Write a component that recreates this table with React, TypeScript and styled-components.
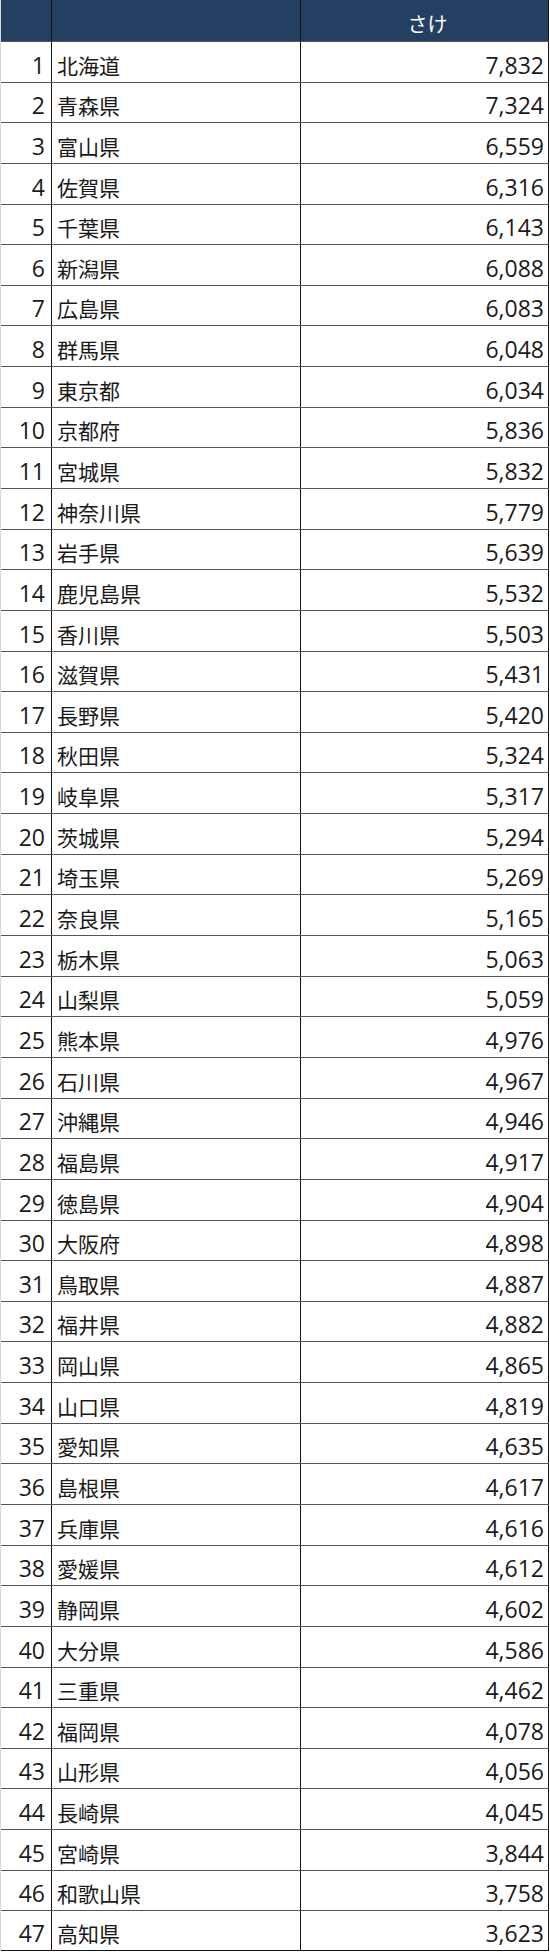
import React from 'react';
import styled, { createGlobalStyle } from 'styled-components';

const data: [string, number][] = [
  ['北海道', 7832],
  ['青森県', 7324],
  ['富山県', 6559],
  ['佐賀県', 6316],
  ['千葉県', 6143],
  ['新潟県', 6088],
  ['広島県', 6083],
  ['群馬県', 6048],
  ['東京都', 6034],
  ['京都府', 5836],
  ['宮城県', 5832],
  ['神奈川県', 5779],
  ['岩手県', 5639],
  ['鹿児島県', 5532],
  ['香川県', 5503],
  ['滋賀県', 5431],
  ['長野県', 5420],
  ['秋田県', 5324],
  ['岐阜県', 5317],
  ['茨城県', 5294],
  ['埼玉県', 5269],
  ['奈良県', 5165],
  ['栃木県', 5063],
  ['山梨県', 5059],
  ['熊本県', 4976],
  ['石川県', 4967],
  ['沖縄県', 4946],
  ['福島県', 4917],
  ['徳島県', 4904],
  ['大阪府', 4898],
  ['鳥取県', 4887],
  ['福井県', 4882],
  ['岡山県', 4865],
  ['山口県', 4819],
  ['愛知県', 4635],
  ['島根県', 4617],
  ['兵庫県', 4616],
  ['愛媛県', 4612],
  ['静岡県', 4602],
  ['大分県', 4586],
  ['三重県', 4462],
  ['福岡県', 4078],
  ['山形県', 4056],
  ['長崎県', 4045],
  ['宮崎県', 3844],
  ['和歌山県', 3758],
  ['高知県', 3623],
];

// body rows share 1910px, so spread the odd pixels
const BODY = 1910;
const rowHeight = (i: number) =>
  Math.round(((i + 1) * BODY) / data.length) - Math.round((i * BODY) / data.length);

const GlobalStyle = createGlobalStyle`
  body {
    margin: 0;
    background: #ffffff;
    font-family: "Noto Sans CJK JP", "Noto Sans", sans-serif;
  }
`;

export default function App() {
  return (
    <>
      <GlobalStyle />
      <Sheet>
        <HeaderRow>
          <HeadCell />
          <HeadCell />
          <HeadCell $center>さけ</HeadCell>
        </HeaderRow>
        {data.map(([name, value], i) => (
          <Row key={name} $h={rowHeight(i)} $last={i === data.length - 1}>
            <RankCell>{i + 1}</RankCell>
            <NameCell>{name}</NameCell>
            <ValueCell>{value.toLocaleString('en-US')}</ValueCell>
          </Row>
        ))}
      </Sheet>
    </>
  );
}

const Sheet = styled.div`
  width: 548px;
  display: flex;
  flex-direction: column;
  font-size: 20px;
  color: #1a1a1a;
  border-left: 1px solid #d8d8d8;
`;

const HeaderRow = styled.div`
  display: grid;
  grid-template-columns: 51px 249px 1fr;
  height: 41px;
  background: #243f61;
  color: #ffffff;
`;

const HeadCell = styled.div<{ $center?: boolean }>`
  display: flex;
  align-items: center;
  justify-content: ${(p) => (p.$center ? 'center' : 'flex-start')};
  padding-top: 6px;
  padding-left: ${(p) => (p.$center ? '6px' : '0')};
  border-right: 1px solid #111;
  line-height: 1;
`;

const Row = styled.div<{ $h: number; $last?: boolean }>`
  display: grid;
  grid-template-columns: 51px 249px 1fr;
  box-sizing: border-box;
  height: ${(p) => p.$h}px;
  border-top: 1px solid #555;
  border-bottom: ${(p) => (p.$last ? '1px solid #111' : 'none')};
`;

const Cell = styled.div`
  display: flex;
  align-items: center;
  padding: 6px 5px 0;
  line-height: 1;
  white-space: nowrap;
  border-right: 1px solid #111;
`;

const NumberCell = styled(Cell)`
  justify-content: flex-end;
  font-family: "Open Sans", "Noto Sans", sans-serif;
  font-size: 23px;
`;

const RankCell = styled(NumberCell)`
  padding-right: 6px;
`;

const NameCell = styled(Cell)`
  justify-content: flex-start;
  font-size: 21px;
`;

const ValueCell = styled(NumberCell)`
  padding-right: 4px;
`;
